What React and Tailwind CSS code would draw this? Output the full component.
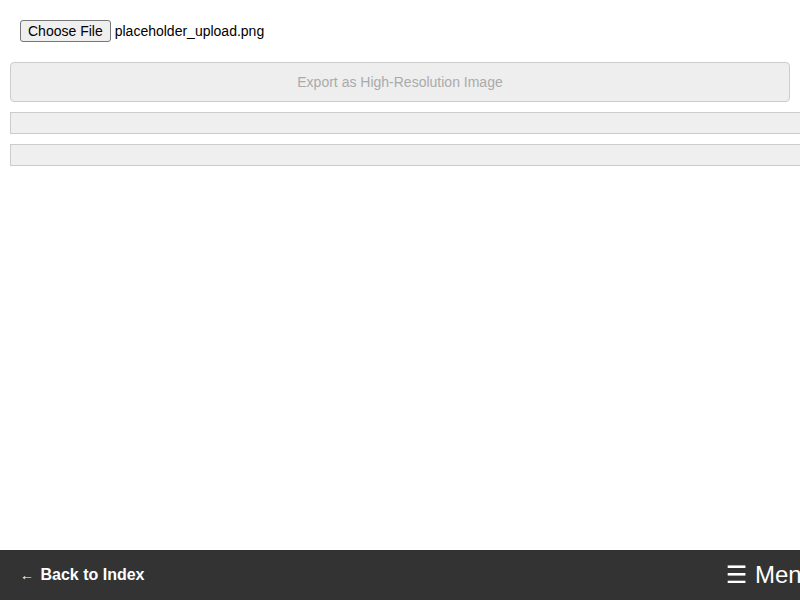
import React from "react";

export default function App() {
  return (
    <div className="h-screen w-full overflow-hidden flex flex-col bg-white font-['Liberation_Sans',Arial,sans-serif]">
      <main className="flex-1 p-[10px]">
        <div className="p-[10px] flex items-center text-[14px] text-black">
          <button className="h-[22px] px-[7px] bg-[#efefef] border border-[#767676] rounded-[3px] text-[14px] leading-none">
            Choose File
          </button>
          <span className="ml-[4px]">placeholder_upload.png</span>
        </div>
        <button
          disabled
          className="mt-[10px] w-full h-[40px] bg-[#eeeeee] border border-[#cccccc] rounded-[4px] text-[14px] text-[#aaaaaa]"
        >
          Export as High-Resolution Image
        </button>
        <div className="mt-[10px] w-[800px] h-[22px] bg-[#efefef] border border-[#cccccc]"></div>
        <div className="mt-[10px] w-[800px] h-[22px] bg-[#efefef] border border-[#cccccc]"></div>
      </main>
      <footer className="h-[50px] w-[835px] shrink-0 bg-[#333333] text-white flex items-center justify-between px-[20px]">
        <a className="font-bold text-[16px]">
          <span className="text-[14px] font-normal mr-[2px]">←</span> Back to Index
        </a>
        <span className="text-[24px] font-['DejaVu_Sans','Liberation_Sans',sans-serif]">
          ☰ <span className="font-['Liberation_Sans',Arial,sans-serif]">Menu</span>
        </span>
      </footer>
    </div>
  );
}
